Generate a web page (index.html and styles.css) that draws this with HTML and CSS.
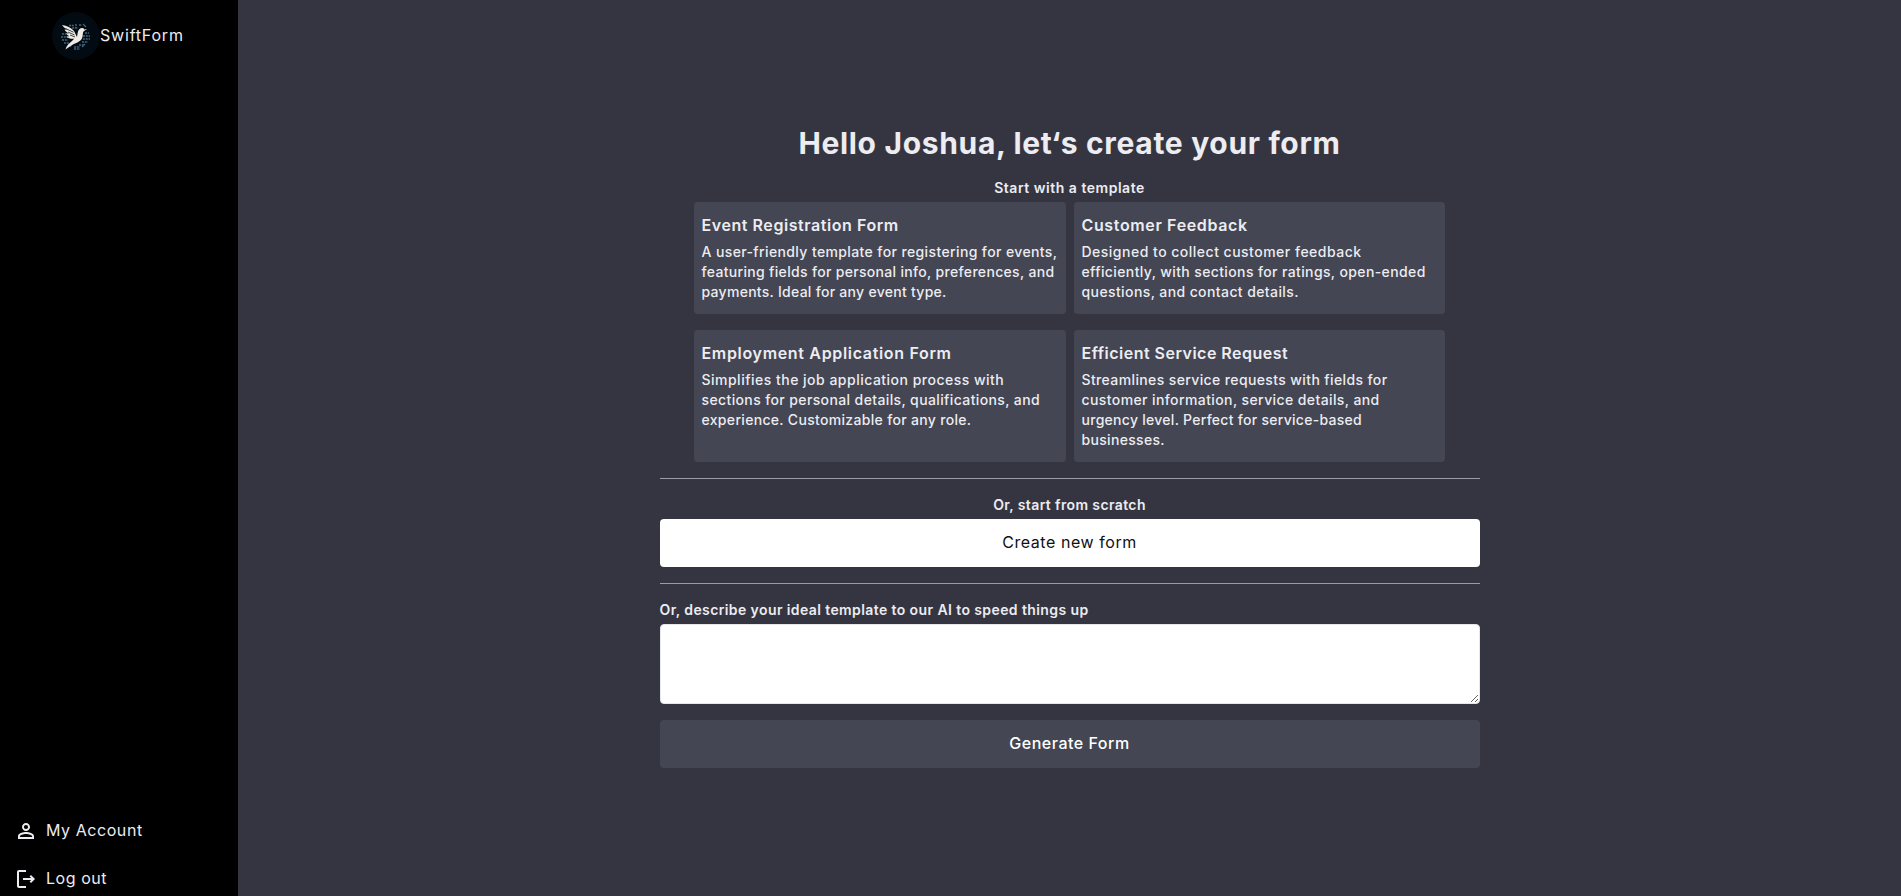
FILE: index.html
```html
<!DOCTYPE html>
<html lang="en">
<head>
<meta charset="utf-8">
<title>SwiftForm</title>
<link rel="stylesheet" href="styles.css">
</head>
<body>
<aside class="sidebar">
  <div class="brand">
    <svg class="logo" viewBox="0 0 48 48" aria-hidden="true">
      <circle cx="24" cy="24" r="24" fill="#020a12"/>
      <g fill="none" stroke="#3f657d">
        <path d="M17 13.500h5M24 12v4M27 13h3M20 16h6M10 22h4M9 25h7M10 28h6M12 31h5M33 21h4M31 24h7M31 27h7M30 30h6M27 33h5M22 35h6M22 37h6" stroke-width="1.400" stroke-dasharray="2 .8"/>
        <path d="M31 12l3 3M20 32l-2 3M33 32l-3 3" stroke-width="1.200"/>
      </g>
      <path d="M10 13c5 1 9 2.500 12 6l3 6c.7-3.500.5-6 2.500-8 1.800-1.500 4.200-1 4.700.4l3-.4-3.500 2.200c-1.500 2-.2 5-2.200 8-2 3-6 3.600-8.500 5.300-3 1.700-5 3.500-7.500 5 1-4 3.500-6 7.500-9.500l1-1.200c-3.500.2-6-.8-7.500-2.300l3-.2c-2-1-3-1.800-3.500-3l3 .1c-2.500-1.200-4-2.700-4.500-3.900l3 .2c-2-1-3.500-2.200-4.500-3.500z" fill="#eeebe4"/>
      <path d="M13.500 16.500l8 3.700M16 20l6.500 3M18 23l5 2" stroke="#15191d" stroke-width=".8"/>
    </svg>
    <span class="ls-80">SwiftForm</span>
  </div>
  <nav class="links">
    <a class="link"><svg class="icon" viewBox="0 0 24 24"><path d="M12 5.900a2.100 2.100 0 1 1 0 4.200 2.100 2.100 0 0 1 0-4.200m0 9c2.970 0 6.100 1.460 6.100 2.100v1.100H5.900V17c0-.64 3.130-2.100 6.100-2.100M12 4C9.790 4 8 5.790 8 8s1.790 4 4 4 4-1.790 4-4-1.790-4-4-4m0 9c-2.670 0-8 1.340-8 4v3h16v-3c0-2.660-5.330-4-8-4"/></svg><span class="ls-56">My Account</span></a>
    <a class="link"><svg class="icon" viewBox="0 0 24 24"><path d="M17 8l-1.410 1.410L17.170 11H9v2h8.170l-1.580 1.580L17 16l4-4zM5 5h7V3H5c-1.100 0-2 .9-2 2v14c0 1.100.9 2 2 2h7v-2H5z"/></svg><span class="ls-56">Log out</span></a>
  </nav>
</aside>
<main class="main">
  <section class="panel">
    <h1 class="title">Hello Joshua, let‘s create your form</h1>
    <p class="label label-first ls-52">Start with a template</p>
    <div class="cards">
      <article class="card"><h2 class="ls-56">Event Registration Form</h2><p><span class="ls-38">A user-friendly template for registering for events,</span><br><span class="ls-32">featuring fields for personal info, preferences, and</span><br><span class="ls-28">payments. Ideal for any event type.</span></p></article>
      <article class="card"><h2 class="ls-64">Customer Feedback</h2><p><span class="ls-49">Designed to collect customer feedback</span><br><span class="ls-38">efficiently, with sections for ratings, open-ended</span><br><span class="ls-40">questions, and contact details.</span></p></article>
      <article class="card"><h2 class="ls-67">Employment Application Form</h2><p><span class="ls-49">Simplifies the job application process with</span><br><span class="ls-38">sections for personal details, qualifications, and</span><br><span class="ls-32">experience. Customizable for any role.</span></p></article>
      <article class="card"><h2 class="ls-49">Efficient Service Request</h2><p><span class="ls-38">Streamlines service requests with fields for</span><br><span class="ls-40">customer information, service details, and</span><br><span class="ls-28">urgency level. Perfect for service-based</span><br><span class="ls-32">businesses.</span></p></article>
    </div>
    <hr class="rule">
    <p class="label ls-38">Or, start from scratch</p>
    <button class="btn btn-light ls-56">Create new form</button>
    <hr class="rule">
    <p class="label label-left ls-40">Or, describe your ideal template to our AI to speed things up</p>
    <textarea class="prompt"></textarea>
    <button class="btn btn-dark ls-52">Generate Form</button>
  </section>
</main>
</body>
</html>
```
FILE: styles.css
```css
* { box-sizing: border-box; margin: 0; padding: 0; }
body { display: flex; height: 100vh; overflow: hidden; background: #353541; color: #ececf1; font-family: Inter, "Open Sans", sans-serif; font-size: 16px; line-height: 24px; }
.sidebar { display: flex; flex-direction: column; justify-content: space-between; width: 238px; flex: none; background: #000; }
.brand { display: flex; align-items: center; padding: 12px 0 0 52px; white-space: nowrap; }
.brand span, .link span { padding-bottom: 2px; }
.logo { width: 48px; height: 48px; }
.links { display: flex; flex-direction: column; gap: 22px; padding: 0 14px 4px; }
.link { display: flex; align-items: center; gap: 8px; white-space: nowrap; }
.icon { width: 24px; height: 24px; fill: #ececf1; }
.main { flex: 1; display: flex; justify-content: center; padding-top: 123px; }
.panel { width: 820px; display: flex; flex-direction: column; white-space: nowrap; }
.title { font-size: 30px; line-height: 40px; font-weight: 700; letter-spacing: .67px; text-align: center; }
.label { font-size: 14px; line-height: 20px; font-weight: 600; text-align: center; margin-top: 16px; }
.label-first { margin-top: 15px; }
.label-left { text-align: left; }
.cards { display: grid; grid-template-columns: 372px 371px; gap: 16px 8px; margin: 4px 0 16px 34px; }
.card { background: #444653; border-radius: 4px; padding: 11px 8px 12px; }
.card h2 { font-size: 16px; line-height: 24px; font-weight: 600; margin-bottom: 5px; }
.card p { font-size: 14px; line-height: 20px; font-weight: 500; }
.rule { border: 0; border-top: 1px solid #9a9ba5; }
.btn { height: 48px; border: 0; border-radius: 4px; padding-bottom: 2px; font: 500 16px/24px Inter, sans-serif; margin-top: 4px; }
.btn-light { background: #fff; color: #111; font-weight: 400; margin-bottom: 16px; }
.btn-dark { background: #444653; color: #fff; margin-top: 16px; }
.prompt { height: 80px; margin-top: 4px; border: 1px solid #e5e7eb; border-radius: 4px; background: #fff; resize: vertical; }

/* Tracking steps, in hundredths of a pixel */
.ls-28 { letter-spacing: .28px; }
.ls-32 { letter-spacing: .32px; }
.ls-38 { letter-spacing: .38px; }
.ls-40 { letter-spacing: .40px; }
.ls-49 { letter-spacing: .49px; }
.ls-52 { letter-spacing: .52px; }
.ls-56 { letter-spacing: .56px; }
.ls-64 { letter-spacing: .64px; }
.ls-67 { letter-spacing: .67px; }
.ls-80 { letter-spacing: .80px; }
```
